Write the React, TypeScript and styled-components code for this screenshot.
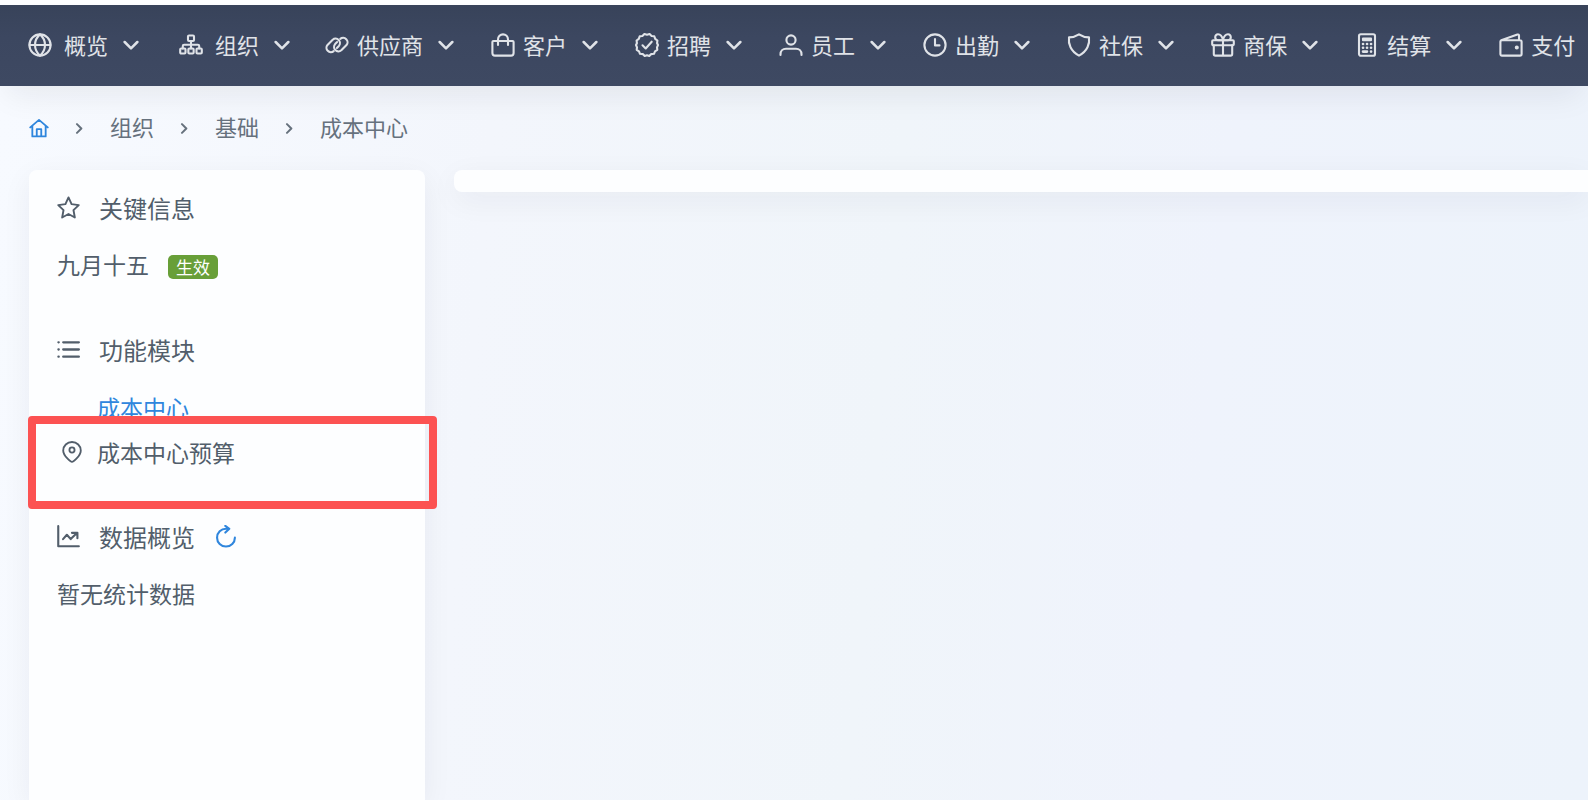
import React from 'react';
import styled, { createGlobalStyle } from 'styled-components';

const GlobalStyle = createGlobalStyle`
  *, *::before, *::after { box-sizing: border-box; }
  html, body { margin: 0; padding: 0; }
  body {
    background: #fdfeff;
    color: #525e6b;
    font-family: "Noto Sans CJK SC", "Noto Sans", sans-serif;
    font-size: 23px;
    overflow-x: hidden;
  }
  button { font: inherit; color: inherit; background: none; border: 0; padding: 0; cursor: pointer; }
  a { color: inherit; text-decoration: none; }
  h2, p, ul, ol { margin: 0; padding: 0; font: inherit; list-style: none; }
`;

const Page = styled.div`
  min-height: 100vh;
  padding-top: 5px;
  display: flex;
  flex-direction: column;
  overflow: hidden;
`;

const TopBar = styled.header`
  position: relative;
  flex: none;
  padding: 23px 0 24px 28px;
  background: linear-gradient(#38435a, #3c4760 40%, #3e4962);
  box-shadow: 0 16px 32px -8px rgba(30, 30, 40, 0.08);
`;

const Menu = styled.ul`
  display: flex;
  align-items: center;
`;

const MenuItem = styled.li<{ $gap: number; $after: number }>`
  flex: none;
  margin-right: ${(p) => p.$after}px;

  button {
    display: flex;
    align-items: center;
    color: #e0e3e8;
    font-size: 22px;
    line-height: 32px;
    white-space: nowrap;
  }

  span {
    margin: 0 15px 0 ${(p) => p.$gap}px;
    padding-bottom: 2px;
  }
`;

const Content = styled.div`
  flex: 1;
  display: flex;
  flex-direction: column;
  background: linear-gradient(95deg, #f7faff, #f3f6fc 30%, #f0f5fa 55%, #eff3fc 75%, #edf3fb);
`;

const Breadcrumb = styled.nav`
  flex: none;
  padding: 24px 29px;

  ol {
    display: flex;
    align-items: center;
    gap: 25px;
    color: #66717d;
    font-size: 22px;
    line-height: 32px;
  }

  li { display: flex; }
`;

const Crumb = styled.a`
  padding-bottom: 4px;
`;

const HomeLink = styled.a`
  display: flex;
  color: #2f86dd;
`;

const Columns = styled.div`
  flex: 1;
  display: flex;
  gap: 29px;
  padding-left: 29px;
`;

const Sidebar = styled.aside`
  position: relative;
  flex: 0 0 396px;
  padding: 15px 28px;
  background: #fdfeff;
  border-radius: 8px 8px 0 0;
  box-shadow: 0 8px 30px rgba(30, 30, 50, 0.06);
`;

const MainCard = styled.main`
  flex: 1;
  height: 22px;
  background: #fdfeff;
  border-radius: 8px 0 0 8px;
  box-shadow: 0 8px 30px rgba(30, 30, 50, 0.06);
`;

const Section = styled.section`
  display: flex;
  flex-direction: column;
  gap: 12px;
  margin-bottom: 40px;
`;

const SectionHead = styled.div`
  display: flex;
  align-items: center;
  gap: 19px;
  height: 45px;

  h2 { font-size: 24px; }
`;

const Row = styled.p`
  display: flex;
  align-items: baseline;
  gap: 19px;
  line-height: 45px;
`;

const Badge = styled.span`
  padding: 0 8px;
  border-radius: 5px;
  background: #689f38;
  color: #fff;
  font-size: 17px;
  line-height: 24px;
`;

const ModuleLink = styled.a<{ $active?: boolean }>`
  display: flex;
  align-items: center;
  gap: 10px;
  height: 45px;
  color: ${(p) => (p.$active ? '#2f86dd' : 'inherit')};
`;

const IconSlot = styled.span`
  display: flex;
  justify-content: center;
  width: 30px;
`;

const RefreshButton = styled.button`
  display: flex;
  color: #2f86dd;
`;

const Highlight = styled.div`
  position: absolute;
  top: 246px;
  left: -1px;
  right: -12px;
  height: 93px;
  border: 8px solid #fc5252;
  border-radius: 4px;
  pointer-events: none;
`;

const Svg = styled.svg`
  display: block;
  flex: none;
  fill: none;
  stroke: currentColor;
  stroke-linecap: round;
  stroke-linejoin: round;
`;

type IconProps = { name: IconName; size?: number; weight?: number };

const shapes = {
  globe: (
    <>
      <circle cx="12" cy="12" r="10.6" />
      <path d="M1.6 12h20.8M12 1.4C8.600 4.400 7 8 7 12s1.600 7.600 5 10.600M12 1.400c3.400 3 5 6.600 5 10.600s-1.600 7.600-5 10.600" />
    </>
  ),
  sitemap: (
    <>
      <rect x="9" y="2.500" width="6" height="5.500" rx="1" />
      <rect x="1.200" y="15.500" width="5.300" height="5" rx="1" />
      <rect x="9.350" y="15.500" width="5.300" height="5" rx="1" />
      <rect x="17.500" y="15.500" width="5.300" height="5" rx="1" />
      <path d="M12 8v7.500M3.800 15.500V13c0-.8.5-1.300 1.300-1.300h13.800c.8 0 1.300.5 1.300 1.300v2.500" />
    </>
  ),
  link: (
    <>
      <path d="M8.700 18.100a4.400 4.400 0 0 1-6.200-6.200l5.200-5.200a4.400 4.400 0 0 1 6.200 6.200l-2 2" />
      <path d="M15.300 5.900a4.400 4.400 0 0 1 6.200 6.200l-5.200 5.200a4.400 4.400 0 0 1-6.200-6.200l2-2" />
    </>
  ),
  bag: <path d="M2.400 8h19.200c.6 0 1 .4 1 1v11c0 1.700-1 2.600-2.600 2.600H4c-1.700 0-2.600-1-2.600-2.600V9c0-.6.4-1 1-1ZM7 12V6.400a5 5 0 0 1 10 0V12" />,
  verified: (
    <>
      <path d="m12 1.800 2.600-.8 2 2 2.700.3.900 2.600 2.200 1.600-.3 2.700L23 12l-1 2.300.3 2.500-2.300 1.500-1 2.500-2.800.3-1.900 1.900-2.300-.8-2.300.8-1.900-1.900-2.800-.3-1-2.500-2.300-1.500.3-2.500L1 12l.9-1.800-.3-2.700 2.200-1.600.9-2.600 2.700-.3 2-2Z" />
      <path d="m7.500 12.300 3.200 3.200 6-6.800" />
    </>
  ),
  user: (
    <>
      <circle cx="12" cy="7" r="4.600" />
      <path d="M1.500 22v-.8c0-3.200 2.300-5.500 5.500-5.500h10c3.200 0 5.500 2.300 5.500 5.500v.8" />
    </>
  ),
  clock: (
    <>
      <circle cx="12" cy="12" r="10.600" />
      <path d="M12 6v6.400h4.500" />
    </>
  ),
  shield: <path d="M12 1.400c2.800 1.900 6.200 2.900 10 3 .9 6.400-1.600 14-10 18.200C3.600 18.400 1.100 10.800 2 4.400c3.800-.1 7.200-1.100 10-3Z" />,
  gift: (
    <>
      <rect x="1.200" y="7.200" width="21.600" height="5" rx="1" />
      <path d="M2.800 12.200v8.800c0 1 .6 1.600 1.600 1.600h15.200c1 0 1.600-.6 1.600-1.600v-8.800M12 7.200v15.400M12 7.200H7.200c-2.200 0-3-1.600-3-3s1-2.900 2.800-2.900c3 0 4.300 2.600 5 5.900Zm0 0h4.800c2.200 0 3-1.600 3-3s-1-2.900-2.800-2.900c-3 0-4.300 2.600-5 5.900Z" />
    </>
  ),
  calculator: (
    <>
      <rect x="4" y="1.200" width="16" height="21.600" rx="1.800" />
      <rect x="8" y="5.600" width="8" height="1.600" />
      <path d="M8 11h.1M12 11h.1M16 11h.1M8 14.800h.1M12 14.800h.1M16 14.800h.1M8 18.600h4M16 18.600h.1" strokeWidth="2.600" />
    </>
  ),
  wallet: (
    <>
      <path d="M3 7.200h18c1 0 1.600.6 1.600 1.600v12.200c0 1-.6 1.600-1.600 1.600H3c-1 0-1.600-.6-1.600-1.600V8.800C1.400 7.800 2 7.200 3 7.200ZM2.200 7.200 18.400 1.600c1-.3 1.600.1 1.600 1v4.600" />
      <circle cx="17.800" cy="14.500" r="1" fill="currentColor" />
    </>
  ),
  down: <path d="m2.500 7.500 9.500 9.500 9.500-9.500" />,
  right: <path d="m6.500 2.500 9.500 9.500-9.500 9.500" />,
  home: <path d="M1.500 11.300 12 2.200l10.500 9.100M4 9.500v12.600h16V9.500M9.300 22v-8.600h5.400V22" />,
  star: <path d="m12 1.500 3.200 7 7.500 1-5.500 5.300 1.400 7.600L12 18.800l-6.600 3.600 1.400-7.600L1.300 9.500l7.500-1Z" />,
  list: <path d="M1.500 4.500h.3M1.500 12h.3M1.500 19.500h.3M6.500 4.500h16.300M6.500 12h16.300M6.500 19.500h16.300" />,
  pin: (
    <>
      <path d="M12 22.800c-1.400 0-9.600-6.600-9.600-12.400a9.600 9.300 0 0 1 19.200 0c0 5.800-8.200 12.400-9.600 12.400Z" />
      <circle cx="12" cy="9.800" r="2.800" />
    </>
  ),
  chart: <path d="M1.300 1.200v21h21.500M6.300 14.700l4-4.500 4 4.500 6.500-6.300M15.600 8.200h5.700v5.500" />,
  refresh: <path d="M21.800 13.200a9.300 9.300 0 1 1-9.300-9.300h3.300M11.800.9l4.200 3-4.200 4" />,
};

type IconName = keyof typeof shapes;

function Icon({ name, size = 24, weight = 2 }: IconProps) {
  return (
    <Svg width={size} height={size} viewBox="0 0 24 24" strokeWidth={weight} aria-hidden="true">
      {shapes[name]}
    </Svg>
  );
}

type Entry = { icon: IconName; label: string; gap?: number; after?: number };

const entries: Entry[] = [
  { icon: 'globe', label: '概览', gap: 12, after: 40 },
  { icon: 'sitemap', label: '组织', gap: 12, after: 35 },
  { icon: 'link', label: '供应商' },
  { icon: 'bag', label: '客户' },
  { icon: 'verified', label: '招聘' },
  { icon: 'user', label: '员工' },
  { icon: 'clock', label: '出勤' },
  { icon: 'shield', label: '社保' },
  { icon: 'gift', label: '商保' },
  { icon: 'calculator', label: '结算' },
  { icon: 'wallet', label: '支付' },
];

export default function App() {
  return (
    <Page>
      <GlobalStyle />
      <TopBar>
        <nav aria-label="主菜单">
          <Menu>
            {entries.map(({ icon, label, gap = 8, after = 37 }, i) => (
              <MenuItem key={label} $gap={gap} $after={after}>
                <button type="button">
                  <Icon name={icon} weight={2.1} />
                  <span>{label}</span>
                  {i < entries.length - 1 && <Icon name="down" size={16} weight={3.8} />}
                </button>
              </MenuItem>
            ))}
          </Menu>
        </nav>
      </TopBar>
      <Content>
        <Breadcrumb aria-label="面包屑">
          <ol>
            <li>
              <HomeLink href="#home" aria-label="首页">
                <Icon name="home" size={20} weight={2.2} />
              </HomeLink>
            </li>
            {['组织', '基础', '成本中心'].map((label) => (
              <React.Fragment key={label}>
                <li aria-hidden="true">
                  <Icon name="right" size={11} weight={4.4} />
                </li>
                <li>
                  <Crumb href="#section">{label}</Crumb>
                </li>
              </React.Fragment>
            ))}
          </ol>
        </Breadcrumb>
        <Columns>
          <Sidebar>
            <Section>
              <SectionHead>
                <Icon name="star" size={23} />
                <h2>关键信息</h2>
              </SectionHead>
              <Row>
                九月十五 <Badge>生效</Badge>
              </Row>
            </Section>
            <Section>
              <SectionHead>
                <Icon name="list" size={23} weight={2.4} />
                <h2>功能模块</h2>
              </SectionHead>
              <ul>
                <li>
                  <ModuleLink href="#cost-center" $active>
                    <IconSlot />
                    成本中心
                  </ModuleLink>
                </li>
                <li>
                  <ModuleLink href="#cost-center-budget">
                    <IconSlot>
                      <Icon name="pin" size={22} />
                    </IconSlot>
                    成本中心预算
                  </ModuleLink>
                </li>
              </ul>
            </Section>
            <Section>
              <SectionHead>
                <Icon name="chart" size={23} weight={2.2} />
                <h2>数据概览</h2>
                <RefreshButton type="button" aria-label="刷新">
                  <Icon name="refresh" size={23} weight={2.2} />
                </RefreshButton>
              </SectionHead>
              <Row>暂无统计数据</Row>
            </Section>
            <Highlight />
          </Sidebar>
          <MainCard />
        </Columns>
      </Content>
    </Page>
  );
}
